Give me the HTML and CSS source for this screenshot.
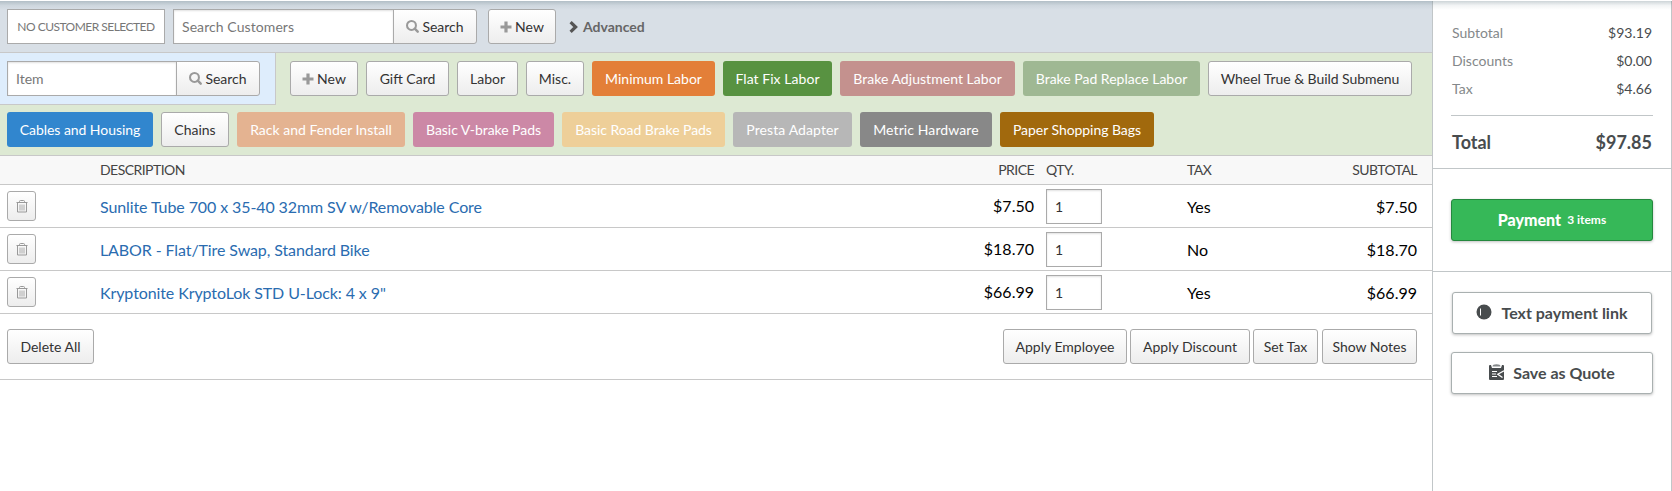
FILE: index.html
```html
<!DOCTYPE html>
<html lang="en">
<head>
<meta charset="utf-8">
<title>Sale</title>
<link rel="stylesheet" href="styles.css">
</head>
<body>
<svg class="defs" width="0" height="0" aria-hidden="true">
  <symbol id="i-search" viewBox="0 0 14 14"><circle cx="5.9" cy="5.9" r="4.8" fill="none" stroke="currentColor" stroke-width="2.2"/><path d="M9.400 9.400 12.600 12.600" stroke="currentColor" stroke-width="2.600" stroke-linecap="round"/></symbol>
  <symbol id="i-plus" viewBox="0 0 12 12"><path d="M6 .5V11.5M.5 6H11.5" stroke="currentColor" stroke-width="3.200"/></symbol>
  <symbol id="i-chevron" viewBox="0 0 10 12"><path d="M1.600 1.200 6.600 6 1.600 10.800" fill="none" stroke="currentColor" stroke-width="3.200"/></symbol>
  <symbol id="i-trash" viewBox="0 0 12 13"><path d="M.5 2.500H11.500M3.500 2.500V1.500Q3.500 .5 4.500 .5H7.500Q8.500 .5 8.500 1.500V2.500M1.500 2.500V12H10.500V2.500" fill="none" stroke="currentColor"/><path d="M4 4.500V10.500M6 4.500V10.500M8 4.500V10.500" stroke="#aaa"/></symbol>
</svg>
<div class="page">
  <main class="sale">
    <section class="customer-bar">
      <div class="customer-name">NO CUSTOMER SELECTED</div>
      <div class="combo combo-customer">
        <input class="field" type="text" placeholder="Search Customers">
        <button class="btn"><svg class="icon icon-search"><use href="#i-search"/></svg>Search</button>
      </div>
      <button class="btn btn-new"><svg class="icon icon-plus"><use href="#i-plus"/></svg>New</button>
      <a class="advanced"><svg class="icon-chevron"><use href="#i-chevron"/></svg>Advanced</a>
    </section>
    <section class="item-bar">
      <div class="item-row">
        <div class="item-search">
          <div class="combo combo-item">
            <input class="field" type="text" placeholder="Item">
            <button class="btn"><svg class="icon icon-search"><use href="#i-search"/></svg>Search</button>
          </div>
        </div>
        <div class="quick quick-first">
          <button class="btn btn-new"><svg class="icon icon-plus"><use href="#i-plus"/></svg>New</button>
          <button class="btn gift">Gift Card</button>
          <button class="btn labor">Labor</button>
          <button class="btn misc">Misc.</button>
          <button class="btn tile orange">Minimum Labor</button>
          <button class="btn tile green">Flat Fix Labor</button>
          <button class="btn tile rose">Brake Adjustment Labor</button>
          <button class="btn tile sage">Brake Pad Replace Labor</button>
          <button class="btn wheel">Wheel True &amp; Build Submenu</button>
        </div>
      </div>
      <div class="quick quick-second">
        <button class="btn tile blue">Cables and Housing</button>
        <button class="btn chains">Chains</button>
        <button class="btn tile peach">Rack and Fender Install</button>
        <button class="btn tile pink">Basic V-brake Pads</button>
        <button class="btn tile sand">Basic Road Brake Pads</button>
        <button class="btn tile silver">Presta Adapter</button>
        <button class="btn tile gray">Metric Hardware</button>
        <button class="btn tile brown">Paper Shopping Bags</button>
      </div>
    </section>
    <section class="lines">
      <div class="line head"><span></span><span>DESCRIPTION</span><span class="num">PRICE</span><span class="qty">QTY.</span><span>TAX</span><span class="num">SUBTOTAL</span></div>
      <div class="line">
        <button class="btn btn-trash"><svg class="icon-trash"><use href="#i-trash"/></svg></button>
        <a class="desc">Sunlite Tube 700 x 35-40 32mm SV w/Removable Core</a>
        <span class="num price">$7.50</span><span class="qty"><input class="field" type="text" value="1"></span>
        <span>Yes</span><span class="num">$7.50</span>
      </div>
      <div class="line">
        <button class="btn btn-trash"><svg class="icon-trash"><use href="#i-trash"/></svg></button>
        <a class="desc">LABOR - Flat/Tire Swap, Standard Bike</a>
        <span class="num price">$18.70</span><span class="qty"><input class="field" type="text" value="1"></span>
        <span>No</span><span class="num">$18.70</span>
      </div>
      <div class="line">
        <button class="btn btn-trash"><svg class="icon-trash"><use href="#i-trash"/></svg></button>
        <a class="desc">Kryptonite KryptoLok STD U-Lock: 4 x 9"</a>
        <span class="num price">$66.99</span><span class="qty"><input class="field" type="text" value="1"></span>
        <span>Yes</span><span class="num">$66.99</span>
      </div>
    </section>
    <section class="actions">
      <button class="btn delete-all">Delete All</button>
      <div class="actions-right">
        <button class="btn employee">Apply Employee</button>
        <button class="btn discount">Apply Discount</button>
        <button class="btn set-tax">Set Tax</button>
        <button class="btn notes">Show Notes</button>
      </div>
    </section>
  </main>
  <aside class="summary">
    <section class="totals">
      <div class="sum"><span>Subtotal</span><b>$93.19</b></div>
      <div class="sum"><span>Discounts</span><b>$0.00</b></div>
      <div class="sum"><span>Tax</span><b>$4.66</b></div>
      <div class="total"><span>Total</span><span>$97.85</span></div>
    </section>
    <section class="pay"><button class="pay-btn">Payment <small>3 items</small></button></section>
    <section class="more">
      <button class="more-btn link"><svg width="16" height="16" viewBox="0 0 16 16"><circle cx="8" cy="8" r="7.500" fill="#484c4e"/><path d="M4.500 4.500V11.500" stroke="#fff"/></svg>Text payment link</button>
      <button class="more-btn quote"><svg width="15" height="17" viewBox="0 0 15 17"><path d="M0 2Q0 1 1 1H2L3 4H12L13 1H14Q15 1 15 2V15Q15 16 14 16H1Q0 16 0 15Z" fill="#484c4e"/><path d="M3.500 2.500Q3.500 .3 7.500 .3T11.500 2.500Z" fill="#84888a"/><path d="M3 7.500H8M3 10H7M3 12.500H8" fill="none" stroke="#fff"/><path d="M15 6.700 8.800 10.200 13.500 13.500" fill="none" stroke="#fff" stroke-width="1.300"/></svg>Save as Quote</button>
    </section>
  </aside>
</div>
</body>
</html>
```
FILE: styles.css
```css
* { box-sizing: border-box; }
body { margin: 0; font-family: Lato, "Liberation Sans", sans-serif; font-size: 14px; color: #333; background: #fff; overflow: hidden; }
button, input { font: inherit; margin: 0; }
.defs { position: absolute; }
.page { position: relative; display: flex; height: 491px; padding-top: 1px; }
.page::before { content: ""; position: absolute; top: 1px; left: 0; right: 0; height: 9px; background: linear-gradient(rgba(90, 115, 125, .3), rgba(90, 115, 125, .08) 50%, rgba(90, 115, 125, 0)); }
.sale { width: 1432px; }
.btn { display: inline-flex; align-items: center; justify-content: center; flex: none; height: 35px; padding: 0; border: 1px solid #aaa; border-radius: 3px; background: linear-gradient(#fff, #ededed); color: #333; font-size: 14px; line-height: 20px; white-space: nowrap; }
.field { height: 35px; border: 1px solid #aaa; border-radius: 0; background: #fff; padding: 0 8px; box-shadow: inset 0 1px 2px rgba(0, 0, 0, .12); color: #333; outline: 0; }
.field::placeholder { color: #777; opacity: 1; }
.icon { color: #999; margin-right: 3px; flex: none; }
.icon-search { width: 13px; height: 13px; }
.icon-plus { width: 12px; height: 12px; }
.customer-bar { display: flex; height: 52px; padding: 8px 7px; background: #d8dfe6; border-bottom: 1px solid #c8c8c8; }
.customer-name { width: 158px; height: 35px; margin-right: 8px; border: 1px solid #aaa; background: #fff; color: #777; font-size: 12px; letter-spacing: -.52px; line-height: 34px; text-align: center; white-space: nowrap; }
.combo { display: flex; }
.combo .btn { width: 84px; margin-left: -1px; border-radius: 0 3px 3px 0; }
.combo-customer .field { width: 221px; letter-spacing: .08px; }
.combo-item .field { width: 170px; }
.btn-new { width: 68px; }
.customer-bar .btn-new { margin-left: 11px; }
.advanced { display: flex; align-items: center; height: 35px; margin-left: 13px; color: #666; font-weight: 700; }
.icon-chevron { width: 10px; height: 12px; margin-right: 4px; color: #555; }
.item-bar { background: #dde9d3; border-bottom: 1px solid #c8c8c8; height: 103px; }
.item-row { display: flex; }
.item-search { width: 276px; height: 52px; padding: 8px 7px; background: #deedfc; border-right: 1px solid #c8c8c8; border-bottom: 1px solid #c8c8c8; }
.quick { display: flex; gap: 8px; }
.quick-first { padding: 8px 0 0 14px; }
.quick-second { padding: 7px 0 0 7px; }
.tile { border: 0; color: #fff; }
.gift { width: 83px; }
.labor { width: 61px; }
.misc { width: 58px; }
.wheel { width: 204px; letter-spacing: -.06px; }
.chains { width: 68px; }
.orange { width: 123px; background: #e37f38; }
.green { width: 109px; background: #589241; letter-spacing: .05px; }
.rose { width: 175px; background: #c4918e; letter-spacing: .04px; }
.sage { width: 177px; background: #9fb893; }
.blue { width: 146px; background: #3186ce; letter-spacing: -.05px; }
.peach { width: 168px; background: #e4b391; }
.pink { width: 141px; background: #cc88a6; letter-spacing: -.05px; }
.sand { width: 163px; background: #eecf99; letter-spacing: -.05px; }
.silver { width: 119px; background: #b7b7b7; letter-spacing: .1px; }
.gray { width: 132px; background: #888; letter-spacing: .1px; }
.brown { width: 154px; background: #a1690d; letter-spacing: -.05px; }
.line { display: grid; grid-template-columns: 93px 1fr 120px 153px 100px 130px; align-items: center; height: 43px; padding: 0 15px 0 7px; border-bottom: 1px solid #c8c8c8; font-size: 16px; color: #000; }
.head { height: 29px; padding-bottom: 2px; background: #f8f8f8; font-size: 14px; letter-spacing: -.55px; color: #444; }
.num { text-align: right; }
.qty { padding-left: 12px; display: flex; }
.qty .field { width: 56px; font-size: 14px; }
.price { padding-bottom: 2px; }
.desc { color: #2a6cb0; letter-spacing: -.1px; }
.btn-trash { width: 29px; height: 30px; }
.icon-trash { width: 12px; height: 13px; color: #999; }
.actions { display: flex; justify-content: space-between; height: 66px; padding: 15px 15px 0 7px; border-bottom: 1px solid #c8c8c8; }
.actions-right { display: flex; gap: 3px; }
.delete-all { width: 87px; }
.employee { width: 124px; }
.discount { width: 120px; }
.set-tax { width: 65px; }
.notes { width: 95px; margin-left: 1px; }
.summary { width: 240px; border-left: 1px solid #c1c6c8; border-right: 1px solid #c1c6c8; color: #484c4e; }
.totals { height: 168px; padding: 18px 18px 0; border-bottom: 1px solid #c1c6c8; }
.sum { display: flex; justify-content: space-between; height: 28px; padding: 0 1px; line-height: 28px; color: #84888a; }
.sum b { font-weight: 400; color: #484c4e; }
.total { display: flex; justify-content: space-between; margin-top: 12px; padding: 0 1px; border-top: 1px solid #c1c6c8; line-height: 53px; font-size: 18px; font-weight: 700; }
.pay { height: 103px; padding: 30px 18px 0; border-bottom: 1px solid #c1c6c8; }
.pay-btn { display: flex; align-items: center; justify-content: center; gap: 6px; width: 202px; height: 42px; padding: 0 0 1px; border: 1px solid #24883e; border-radius: 3px; background: #36b858; color: #fff; font-size: 16px; font-weight: 900; box-shadow: 0 1px 3px rgba(0, 0, 0, .25); }
.pay-btn small { font-size: 12px; font-weight: 700; }
.more { display: flex; flex-direction: column; align-items: center; gap: 18px; padding-top: 20px; }
.more-btn { display: flex; align-items: center; justify-content: center; gap: 9px; width: 202px; height: 42px; padding: 0 0 2px; border: 1px solid #a9b0b0; border-radius: 3px; background: #fff; color: #484c4e; font-size: 16px; font-weight: 700; box-shadow: 0 1px 3px rgba(0, 0, 0, .25); }
.link { width: 200px; }
```
